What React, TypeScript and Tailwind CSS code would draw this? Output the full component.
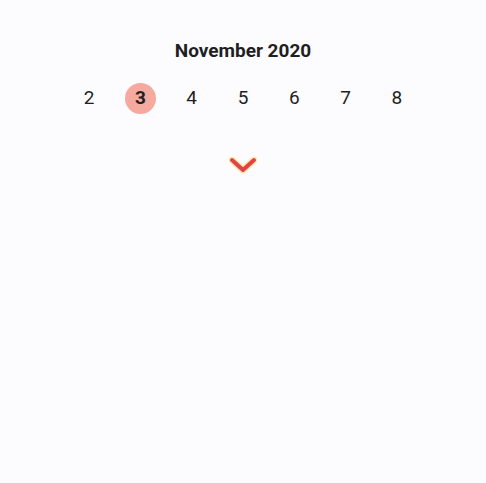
const days = [2, 3, 4, 5, 6, 7, 8]

export default function App() {
	return (
		<div className="flex h-[483px] w-[486px] flex-col items-center bg-[#fcfbfe] font-['Roboto',sans-serif] text-[#1f1f1f]">
			<h1 className="mt-[40px] text-[19px] font-bold leading-[22px]">November 2020</h1>
			<div className="mt-[21px] flex items-center gap-[20.3px]">
				{days.map((d) => (
					<div
						key={d}
						className={`flex h-[31px] w-[31px] items-center justify-center rounded-full text-[19px] ${
							d === 3 ? 'bg-[#f5a99f] font-bold' : ''
						}`}
					>
						{d}
					</div>
				))}
			</div>
			<svg className="mt-[43px]" width="28" height="18" viewBox="0 0 28 18">
				<polyline points="3,3 14,13 25,3" fill="none" stroke="#fdeaa0" strokeWidth="7" strokeLinecap="round" strokeLinejoin="round" />
				<polyline points="3,3 14,13 25,3" fill="none" stroke="#e2434a" strokeWidth="4" strokeLinecap="round" strokeLinejoin="round" />
			</svg>
		</div>
	)
}
